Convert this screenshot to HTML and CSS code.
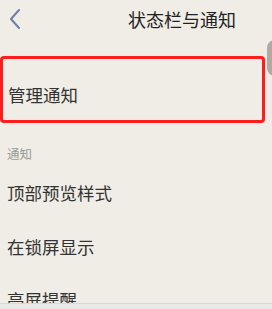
FILE: index.html
```html
<!DOCTYPE html>
<html lang="zh">
<head>
<meta charset="utf-8">
<link rel="stylesheet" href="styles.css">
</head>
<body>
<div class="screen">
  <div class="header">
    <svg class="back" width="14" height="22" viewBox="0 0 14 22"><path d="M11 2 L3 11 L11 20" fill="none" stroke="#6d7fb0" stroke-width="2" stroke-linecap="round" stroke-linejoin="round"/></svg>
    <div class="title">状态栏与通知</div>
  </div>
  <div class="highlight">
    <div class="row-text">管理通知</div>
  </div>
  <div class="section-label">通知</div>
  <div class="row"><span class="row-text">顶部预览样式</span></div>
  <div class="row"><span class="row-text">在锁屏显示</span></div>
  <div class="row"><span class="row-text">亮屏提醒</span></div>
  <div class="bottom-bar"></div>
  <div class="edge-blob"></div>
</div>
</body>
</html>
```
FILE: styles.css
```css
html, body {
  margin: 0;
  padding: 0;
}
body {
  background: #efede5;
  font-family: "Noto Sans CJK SC", "Noto Sans", sans-serif;
}
.screen {
  position: relative;
  width: 272px;
  height: 309px;
  overflow: hidden;
  background: #efede5;
}
.header {
  display: flex;
  align-items: center;
  height: 38px;
  padding-left: 8px;
}
.back {
  display: block;
}
.title {
  margin-left: 106px;
  font-size: 18px;
  color: #222;
  line-height: 38px;
}
.highlight {
  margin-top: 18px;
  width: 254px;
  height: 61px;
  border: 3px solid #ff1c1c;
  border-radius: 4px;
  display: flex;
  align-items: flex-end;
  padding-left: 5px;
  box-sizing: content-box;
}
.highlight .row-text {
  line-height: 26px;
  margin-bottom: 12px;
}
.row-text {
  font-size: 17.5px;
  color: #333;
}
.section-label {
  margin-top: 23px;
  padding-left: 7px;
  font-size: 12.5px;
  color: #9a9a96;
  line-height: 16px;
}
.row {
  padding-left: 7px;
  height: 53.5px;
  line-height: 53.5px;
}
.section-label + .row {
  margin-top: 4px;
}
.bottom-bar {
  position: absolute;
  left: 0;
  right: 0;
  bottom: 0;
  height: 5px;
  background: #e9e9e8;
  border-top: 1px solid #d8d8d6;
}
.edge-blob {
  position: absolute;
  right: -11px;
  top: 40px;
  width: 16px;
  height: 36px;
  border-radius: 8px;
  background: #b0aaa2;
}
```
